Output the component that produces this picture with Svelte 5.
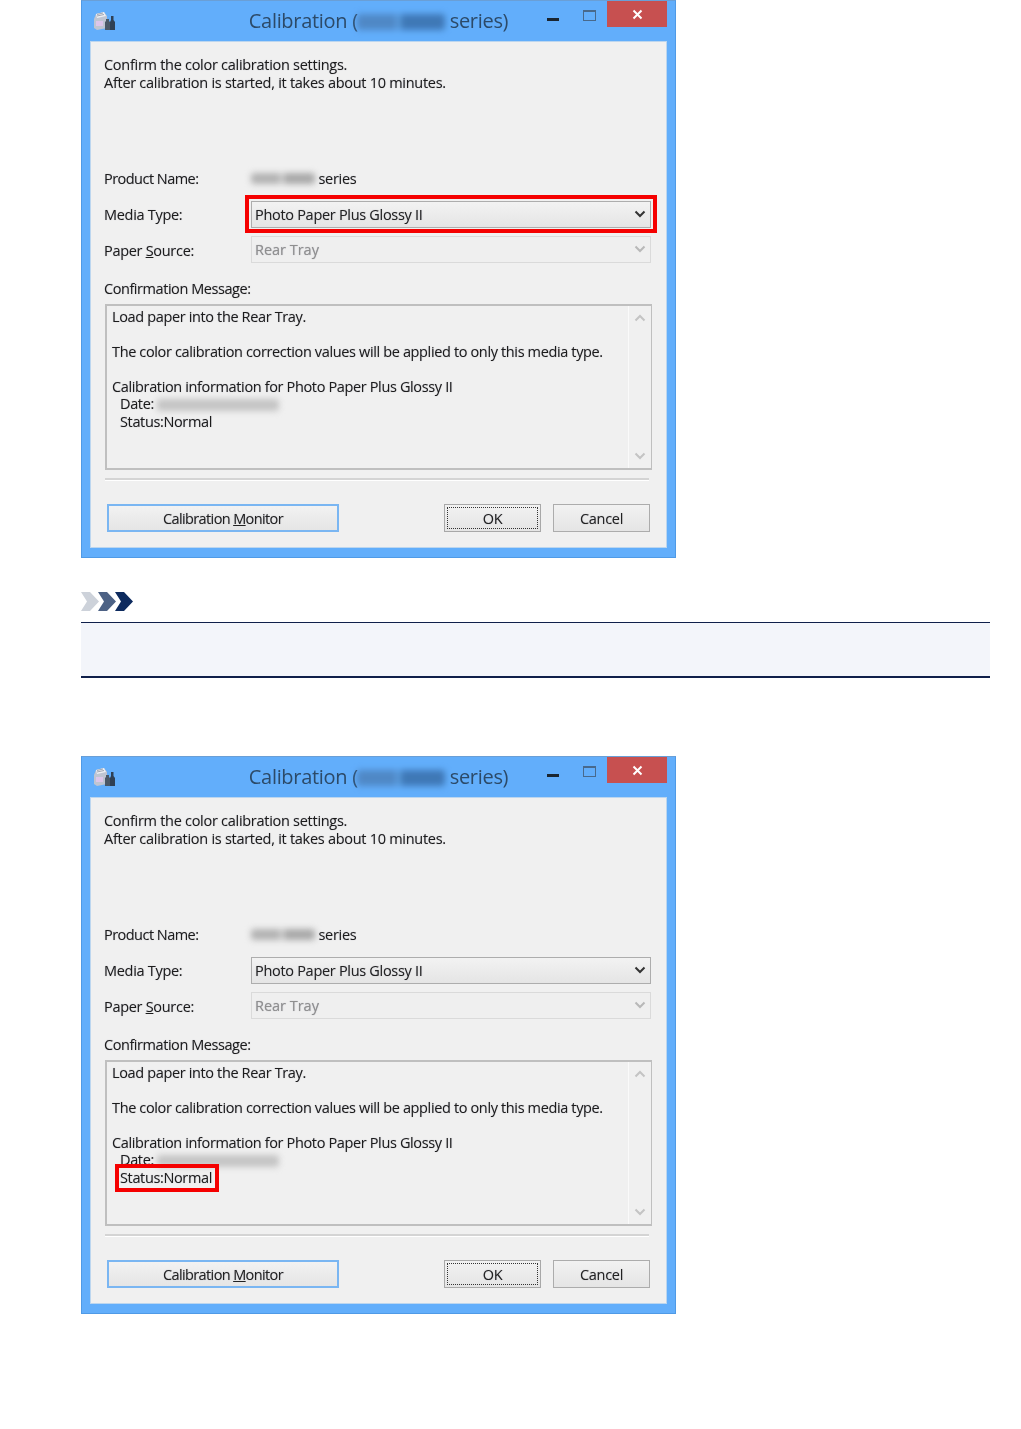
<!--
  Calibration dialog page: two copies of the same dialog with a note block between them.
  The `mark` value picks which control gets the red highlight.
-->
<script>
  const dialogs = [{ mark: 'media' }, { mark: 'status' }];
</script>

{#snippet dialog(mark)}
  <section class="window">
    <header class="titlebar">
      <svg class="app-icon" width="23" height="20" viewBox="0 0 23 20">
        <path d="M1 8 L3 3 L11 1 L14 5 V17 L4 19 L1 17 Z" fill="#bfc5d2" />
        <path d="M3 3 L11 1 L13 5 L4 7 Z" fill="#eef0f5" />
        <path d="M4 3.500 L10 2 M4 5 L11 3.500" stroke="#8d93a0" stroke-width="0.8" />
        <rect x="3" y="10" width="7" height="5" fill="#dcc6ea" />
        <path d="M13 8 h3 v2 l1 1 v8 h-5 v-8 l1 -1 z" fill="#4a5866" />
        <path d="M18 5 h2.500 v4 l1.500 2 v8 h-5 v-8 l1 -2 z" fill="#2f4054" />
      </svg>
      <h1 class="title">
        Calibration (<span class="smudge title-smudge"></span> series)
      </h1>
      <div class="controls">
        <span class="min"></span>
        <span class="max"></span>
        <span class="close">
          <svg width="11" height="11" viewBox="0 0 11 11">
            <path d="M1.500 1.500 L9.500 9.500 M9.500 1.500 L1.500 9.500" stroke="#fff" stroke-width="2" />
          </svg>
        </span>
      </div>
    </header>

    <div class="client">
      <p class="intro">
        Confirm the color calibration settings.<br />
        After calibration is started, it takes about 10 minutes.
      </p>

      <div class="form">
        <span class="label tight">Product Name:</span>
        <span class="product"><span class="smudge product-smudge"></span> series</span>

        <span class="label">Media Type:</span>
        <div class="select">
          <span>Photo Paper Plus Glossy II</span>
          <svg class="chev" width="12" height="8" viewBox="0 0 12 8">
            <path d="M1.500 1.500 L6 6 L10.500 1.500" fill="none" stroke="#333" stroke-width="2" />
          </svg>
          {#if mark === 'media'}<span class="mark mark-media"></span>{/if}
        </div>

        <span class="label">Paper <u>S</u>ource:</span>
        <div class="select disabled">
          <span>Rear Tray</span>
          <svg class="chev" width="12" height="8" viewBox="0 0 12 8">
            <path d="M1.500 1.500 L6 6 L10.500 1.500" fill="none" stroke="#b8b8b8" stroke-width="2" />
          </svg>
        </div>
      </div>

      <div class="label message-label">Confirmation Message:</div>
      <div class="message">
        <div class="message-text">
          <p>Load paper into the Rear Tray.</p>
          <p>The color calibration correction values will be applied to only this media type.</p>
          <p class="info">Calibration information for Photo Paper Plus Glossy II</p>
          <p class="indent">Date:<span class="smudge date-smudge"></span></p>
          <p class="indent status">
            Status:Normal
            {#if mark === 'status'}<span class="mark mark-status"></span>{/if}
          </p>
        </div>
        <div class="scrollbar">
          <svg width="12" height="8" viewBox="0 0 12 8">
            <path d="M1.500 6.500 L6 2 L10.500 6.500" fill="none" stroke="#c4c4c4" stroke-width="2" />
          </svg>
          <svg width="12" height="8" viewBox="0 0 12 8">
            <path d="M1.500 1.500 L6 6 L10.500 1.500" fill="none" stroke="#c4c4c4" stroke-width="2" />
          </svg>
        </div>
      </div>

      <div class="separator"></div>

      <div class="buttons">
        <button class="monitor">Calibration <u>M</u>onitor</button>
        <div class="right-buttons">
          <button class="ok"><span class="ok-focus">OK</span></button>
          <button class="cancel">Cancel</button>
        </div>
      </div>
    </div>
  </section>
{/snippet}

<main class="page">
  {@render dialog(dialogs[0].mark)}

  <div class="note">
    <svg class="note-icon" width="53" height="19" viewBox="0 0 53 19">
      <path d="M0 0 H9 L18 9.500 L9 19 H0 L6 9.500 Z" fill="#cdd2da" />
      <path d="M17 0 H26 L35 9.500 L26 19 H17 L23 9.500 Z" fill="#4d6285" />
      <path d="M34 0 H43 L52 9.500 L43 19 H34 L40 9.500 Z" fill="#0d2a5e" />
    </svg>
    <div class="note-box"></div>
  </div>

  {@render dialog(dialogs[1].mark)}
</main>

<style>
  :global(body) {
    margin: 0;
    background: #fff;
  }

  .page {
    width: 1021px;
    height: 1429px;
    padding-left: 81px;
    box-sizing: border-box;
    font-family: "Open Sans", "Noto Sans", sans-serif;
    font-size: 14.5px;
    letter-spacing: -0.3px;
    color: #1c1c1c;
  }

  .window {
    width: 595px;
    height: 558px;
    box-sizing: border-box;
    background: #62aefb;
    border: 1px solid #4f9ae6;
    border-top-color: #6a9fd6;
    padding: 0 8px 9px;
    display: flex;
    flex-direction: column;
    filter: blur(0.35px);
  }

  .titlebar {
    height: 40px;
    flex: none;
    display: grid;
    grid-template-columns: 1fr auto 1fr;
    align-items: center;
  }

  .app-icon {
    margin: 0 0 0 3px;
  }

  .title {
    margin: -2px 0 0;
    font-size: 20px;
    font-weight: 400;
    letter-spacing: -0.3px;
    color: #2c4a68;
    white-space: nowrap;
  }

  .controls {
    justify-self: end;
    align-self: start;
    display: flex;
    align-items: flex-start;
  }

  .min {
    width: 12px;
    height: 3px;
    margin: 17px 24px 0 0;
    background: #1a2530;
  }

  .max {
    width: 11px;
    height: 8px;
    margin: 9px 11px 0 0;
    border: 1px solid #48698c;
    border-top-width: 2px;
  }

  .close {
    width: 60px;
    height: 26px;
    background: #c75050;
    display: flex;
    align-items: center;
    justify-content: center;
  }

  .client {
    flex: 1;
    background: #f0f0f0;
    border: 1px solid #bcd6ef;
    padding: 0 13px;
    display: flex;
    flex-direction: column;
    text-shadow: 0 0 1px rgba(50, 50, 80, 0.35);
  }

  .intro {
    margin: 14px 0 0;
    line-height: 17.5px;
    height: 104px;
    letter-spacing: -0.28px;
  }

  .form {
    display: grid;
    grid-template-columns: 147px 400px;
    grid-auto-rows: 36px;
    align-items: center;
  }

  .tight {
    letter-spacing: -0.53px;
  }

  .product {
    display: flex;
    align-items: center;
    white-space: pre;
  }

  .smudge {
    display: inline-block;
    border-radius: 3px;
    filter: blur(3px);
    vertical-align: middle;
  }

  .title-smudge {
    width: 88px;
    height: 16px;
    margin-left: -1px;
    background: linear-gradient(90deg, #4f88c6 0 44%, #5c9ee0 44% 50%, #3f78b6 50% 100%);
  }

  .product-smudge {
    width: 64px;
    height: 11px;
    background: linear-gradient(90deg, #b2b2b2 0 46%, #d6d6d6 46% 52%, #a8a8a8 52% 100%);
  }

  .date-smudge {
    width: 122px;
    height: 12px;
    margin-left: 3px;
    background: #c4c4c4;
  }

  .select {
    position: relative;
    height: 27px;
    box-sizing: border-box;
    border: 1px solid #adadad;
    background: linear-gradient(#f2f2f2, #e5e5e5);
    padding: 0 4px 0 3px;
    display: flex;
    align-items: center;
    justify-content: space-between;
    color: #222;
  }

  .select.disabled {
    margin-top: -2px;
    letter-spacing: -0.02px;
    background: #efefef;
    border-color: #dadada;
    color: #8f8f8f;
  }

  .mark {
    position: absolute;
    border: 4px solid #f50000;
    box-sizing: border-box;
    pointer-events: none;
  }

  .mark-media {
    left: -7px;
    top: -7px;
    width: 412px;
    height: 38px;
  }

  .mark-status {
    left: 3px;
    top: -5px;
    width: 104px;
    height: 28px;
  }

  .message-label {
    margin-top: 12px;
    line-height: 18px;
    letter-spacing: -0.44px;
  }

  .message {
    margin: 6px 0 0 1px;
    width: 547px;
    height: 166px;
    box-sizing: border-box;
    border: 2px solid #bfbfbf;
    border-right-width: 1px;
    display: flex;
    justify-content: space-between;
  }

  .message-text {
    padding: 2px 0 0 5px;
    line-height: 17.4px;
    letter-spacing: -0.36px;
  }

  .message-text p {
    margin: 0;
    white-space: nowrap;
  }

  .message-text p + p {
    margin-top: 17.5px;
  }

  .message-text p.indent {
    margin-top: 0;
    padding-left: 8px;
  }

  .status {
    position: relative;
    width: fit-content;
  }

  .scrollbar {
    width: 22px;
    border-left: 1px solid #fafafa;
    padding: 8px 0;
    display: flex;
    flex-direction: column;
    justify-content: space-between;
    align-items: center;
  }

  .separator {
    width: 544px;
    height: 3px;
    margin: 8px 0 0 1px;
    background: #d4d4d4;
    border-bottom: 1px solid #fff;
    box-sizing: border-box;
  }

  .buttons {
    margin-top: 23px;
    width: 543px;
    margin-left: 3px;
    display: flex;
    justify-content: space-between;
  }

  .right-buttons {
    display: flex;
    gap: 12px;
  }

  button {
    height: 28px;
    box-sizing: border-box;
    padding: 0;
    font: inherit;
    letter-spacing: inherit;
    text-shadow: inherit;
    color: #222;
    border: 1px solid #acacac;
    background: linear-gradient(#f2f2f2, #e5e5e5);
  }

  .monitor {
    width: 232px;
    border: 2px solid #7ab6f2;
    letter-spacing: -0.62px;
  }

  .ok {
    width: 97px;
    padding: 2px;
    border-color: #a8a8a8;
  }

  .ok-focus {
    display: flex;
    align-items: center;
    justify-content: center;
    height: 100%;
    border: 1px dotted #333;
    box-sizing: border-box;
  }

  .cancel {
    width: 97px;
  }

  .note {
    height: 198px;
    box-sizing: border-box;
    padding-top: 34px;
    width: 909px;
  }

  .note-icon {
    display: block;
  }

  .note-box {
    margin-top: 11px;
    height: 56px;
    box-sizing: border-box;
    background: #f3f5fa;
    border-top: 1px solid #0f1f4a;
    border-bottom: 2px solid #0f1f4a;
  }
</style>
